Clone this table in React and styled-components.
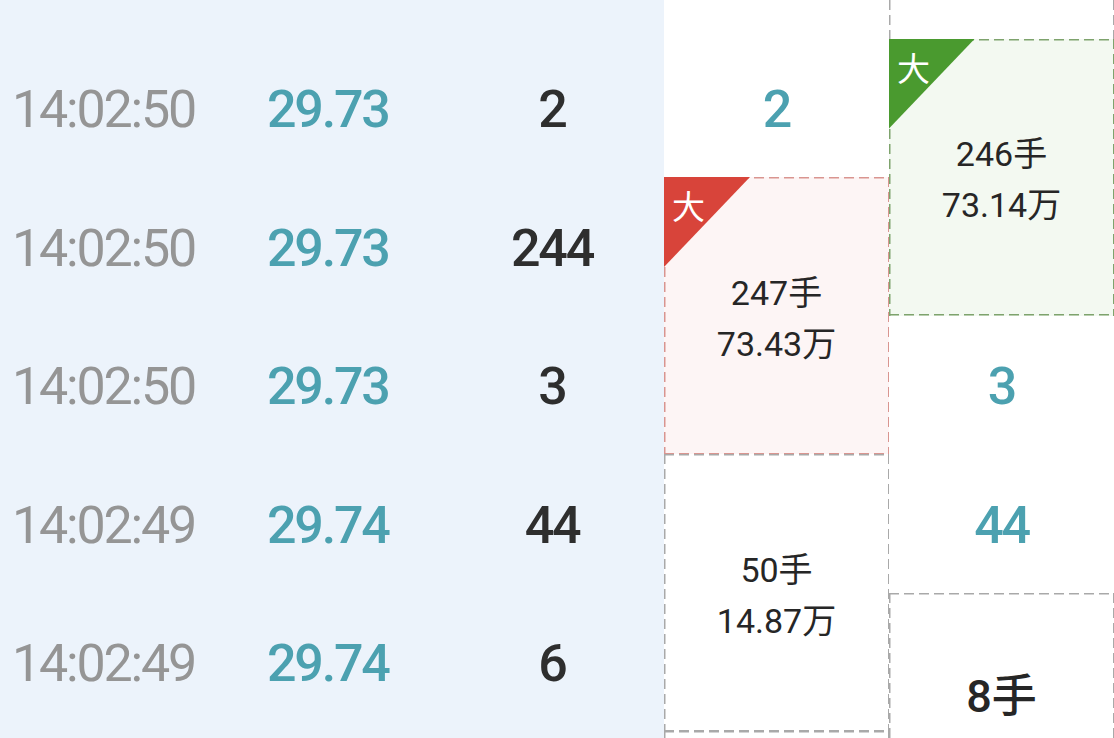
import React from "react";
import styled, { createGlobalStyle, css } from "styled-components";

const GlobalStyle = createGlobalStyle`
  html, body {
    margin: 0;
    padding: 0;
    background: #ffffff;
    font-family: Roboto, "Noto Sans CJK SC", sans-serif;
  }
`;

const ROW = 138.5;
const TOP = 38.5;

const dashed = (color, sides = "trbl") => css`
  background-image:
    ${sides.includes("t") ? `repeating-linear-gradient(90deg, ${color} 0 10px, transparent 10px 15px)` : "none"},
    ${sides.includes("b") ? `repeating-linear-gradient(90deg, ${color} 0 10px, transparent 10px 15px)` : "none"},
    ${sides.includes("l") ? `repeating-linear-gradient(180deg, ${color} 0 10px, transparent 10px 15px)` : "none"},
    ${sides.includes("r") ? `repeating-linear-gradient(180deg, ${color} 0 10px, transparent 10px 15px)` : "none"};
  background-size: 100% 1.5px, 100% 1.5px, 1.5px 100%, 1.5px 100%;
  background-position: left top, left bottom, left top, right top;
  background-repeat: no-repeat;
`;

const Page = styled.div`
  display: flex;
  width: 1114px;
  height: 738px;
  overflow: hidden;
`;

const TradeList = styled.div`
  width: 664px;
  flex-shrink: 0;
  background: #ecf3fb;
  padding-top: ${TOP}px;
  box-sizing: border-box;
`;

const TradeRow = styled.div`
  display: grid;
  grid-template-columns: 255px 173px 1fr;
  align-items: center;
  height: ${ROW}px;
  padding-left: 12px;
  padding-top: 4px;
  box-sizing: border-box;
  font-size: 52px;
  letter-spacing: -2.2px;
`;

const Time = styled.span`
  color: #959595;
  font-weight: 400;
`;

const Price = styled.span`
  color: #4ca1b0;
  font-weight: 500;
`;

const Volume = styled.span`
  color: #2e2e2e;
  font-weight: 500;
  text-align: center;
`;

const BigOrders = styled.div`
  display: grid;
  grid-template-columns: 225px 225px;
  grid-template-rows: ${TOP}px repeat(6, ${ROW}px);
`;

const Cell = styled.div`
  grid-column: ${(p) => p.$col};
  grid-row: ${(p) => p.$row} / span ${(p) => p.$span || 1};
  display: flex;
  align-items: center;
  justify-content: center;
  padding-top: 4px;
  font-size: 52px;
  letter-spacing: -2.2px;
  font-weight: 500;
  color: #4ca1b0;
`;

const tones = {
  buy: { bg: "#fdf5f5", line: "#d99590", tag: "#d8443a" },
  sell: { bg: "#f3f9f1", line: "#7ea36d", tag: "#4a9a2f" },
  plain: { bg: "#ffffff", line: "#a9a9a9", tag: "transparent" },
};

const OrderBox = styled.div`
  position: relative;
  grid-column: ${(p) => p.$col};
  grid-row: ${(p) => p.$row} / span ${(p) => p.$span || 2};
  display: flex;
  flex-direction: column;
  align-items: center;
  justify-content: ${(p) => (p.$top ? "flex-start" : "center")};
  padding-top: ${(p) => (p.$top ? "78px" : "6px")};
  box-sizing: border-box;
  background-color: ${(p) => tones[p.$tone].bg};
  ${(p) => dashed(tones[p.$tone].line, p.$sides || "trbl")}
  color: #262626;
  font-size: 34px;
  font-weight: 400;
  line-height: 51px;
`;

const BigLine = styled.div`
  font-size: 45px;
  font-weight: 500;
`;

const Tag = styled.span`
  position: absolute;
  left: 0;
  top: 0;
  width: 86px;
  height: 90px;
  background: ${(p) => tones[p.$tone].tag};
  clip-path: polygon(0 0, 100% 0, 0 100%);
  color: #ffffff;
  font-size: 33px;
  font-weight: 400;
  line-height: 1;
  box-sizing: border-box;
  padding: 12px 0 0 8px;
  font-family: "Noto Sans CJK SC", sans-serif;
`;

const trades = [
  { time: "14:02:50", price: "29.73", vol: "2" },
  { time: "14:02:50", price: "29.73", vol: "244" },
  { time: "14:02:50", price: "29.73", vol: "3" },
  { time: "14:02:49", price: "29.74", vol: "44" },
  { time: "14:02:49", price: "29.74", vol: "6" },
];

const App = () => {
  return (
    <Page>
      <GlobalStyle />
      <TradeList>
        {trades.map((t, i) => (
          <TradeRow key={i}>
            <Time>{t.time}</Time>
            <Price>{t.price}</Price>
            <Volume>{t.vol}</Volume>
          </TradeRow>
        ))}
      </TradeList>

      <BigOrders>
        <Cell $col={1} $row={2}>2</Cell>
        <OrderBox $col={1} $row={3} $tone="buy">
          <Tag $tone="buy">大</Tag>
          <div>247手</div>
          <div>73.43万</div>
        </OrderBox>
        <OrderBox $col={1} $row={5} $tone="plain">
          <div>50手</div>
          <div>14.87万</div>
        </OrderBox>
        <OrderBox $col={1} $row={7} $span={1} $tone="plain" />

        <OrderBox $col={2} $row={1} $span={1} $tone="plain" $sides="lr" />
        <OrderBox $col={2} $row={2} $tone="sell">
          <Tag $tone="sell">大</Tag>
          <div>246手</div>
          <div>73.14万</div>
        </OrderBox>
        <Cell $col={2} $row={4}>3</Cell>
        <Cell $col={2} $row={5}>44</Cell>
        <OrderBox $col={2} $row={6} $tone="plain" $top>
          <BigLine>8手</BigLine>
        </OrderBox>
      </BigOrders>
    </Page>
  );
};

export default App;
